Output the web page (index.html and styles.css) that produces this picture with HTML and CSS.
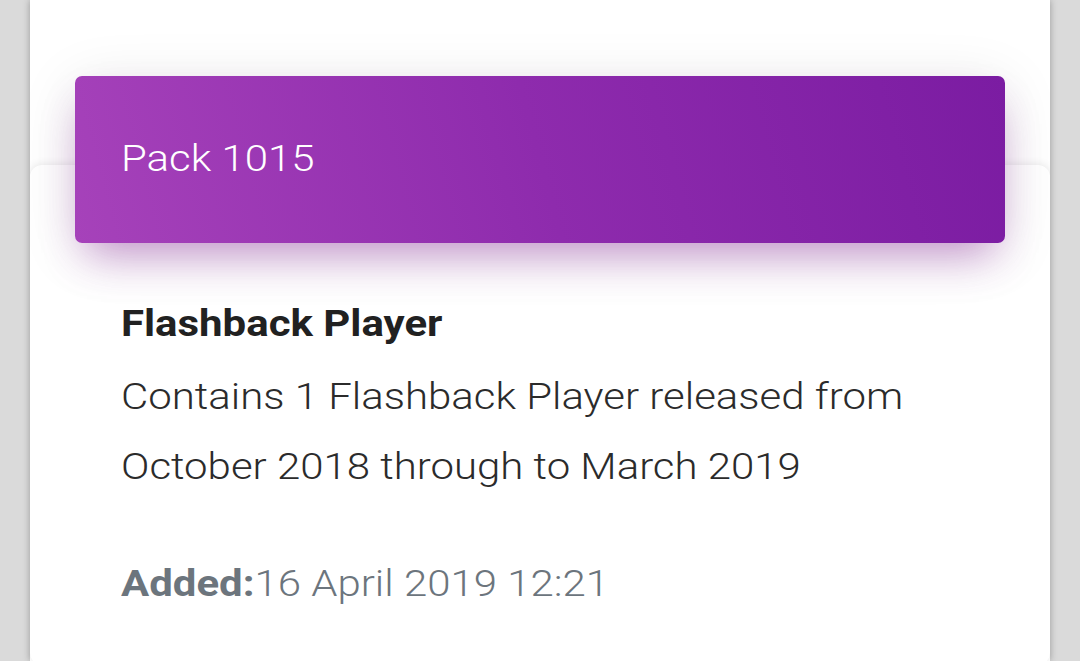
FILE: index.html
```html
<!DOCTYPE html>
<html lang="en">
<head>
<meta charset="utf-8">
<title>Pack 1015</title>
<link rel="stylesheet" href="styles.css">
</head>
<body>
<div class="panel">
  <div class="spacer"></div>
  <div class="card">
    <div class="card-header">
      <h4 class="card-title wide">Pack 1015</h4>
    </div>
    <div class="card-body">
      <h3 class="pack-name wide">Flashback Player</h3>
      <p class="pack-desc wide">Contains 1 Flashback Player released from October 2018 through to March 2019</p>
      <p class="pack-added wide"><strong>Added:</strong>16 April 2019 12:21</p>
    </div>
  </div>
</div>
</body>
</html>
```

FILE: styles.css
```css
html, body {
  margin: 0;
  padding: 0;
  height: 100%;
  overflow: hidden;
}

body {
  background: #dadada;
  font-family: Roboto, "Liberation Sans", Arial, sans-serif;
}

.panel {
  margin: 0 30px;
  height: 661px;
  background: #ffffff;
  box-shadow: 0 0 7px rgba(0, 0, 0, 0.3);
  overflow: hidden;
}

.spacer {
  height: 165px;
}

.card {
  display: flow-root;
  background: #ffffff;
  border-radius: 12px;
  box-shadow: 0 -1px 9px rgba(0, 0, 0, 0.09);
  height: 500px;
}

.card-header {
  margin: -89px 45px 0;
  height: 167px;
  border-radius: 7px;
  background: linear-gradient(75deg, #a642ba 0%, #8e2bad 50%, #7b1ca2 100%);
  box-shadow: 0 10px 60px 0 rgba(0, 0, 0, 0.11), 0 22px 40px -12px rgba(156, 39, 176, 0.45);
  display: flex;
  align-items: center;
  padding: 0 46px;
  position: relative;
}

.wide {
  transform: scaleX(1.165);
  transform-origin: 0 0;
}

.card-title {
  margin: 0;
  color: #ffffff;
  font-weight: 300;
  font-size: 36px;
  line-height: 48px;
  padding-bottom: 2px;
}

.card-body {
  padding: 57px 91px 0;
}

.pack-name {
  margin: 0;
  font-size: 36px;
  line-height: 48px;
  font-weight: 700;
  color: #212121;
}

.pack-desc {
  margin: 14px 0 0;
  width: 720px;
  font-size: 36px;
  line-height: 70px;
  font-weight: 300;
  color: #2b2b2b;
}

.pack-added {
  margin: 47px 0 0;
  font-size: 36px;
  line-height: 70px;
  font-weight: 300;
  color: #6c757d;
}

.pack-added strong {
  font-weight: 700;
}
```
